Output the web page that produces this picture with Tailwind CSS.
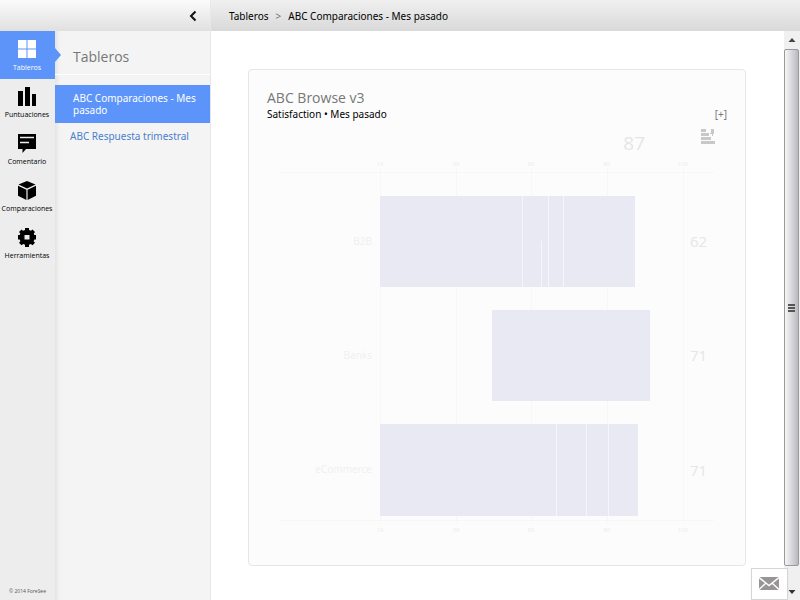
<!DOCTYPE html>
<html lang="es">
<head>
<meta charset="utf-8">
<meta name="viewport" content="width=device-width, initial-scale=1">
<title>ABC Comparaciones - Mes pasado</title>
<script src="https://cdn.jsdelivr.net/npm/@tailwindcss/browser@4"></script>
</head>
<body class="relative flex h-screen flex-col overflow-hidden bg-white font-['Noto_Sans','Open_Sans',sans-serif] text-[10px] text-black">

<header class="flex h-[31px] shrink-0">
  <div class="flex w-[211px] shrink-0 items-center justify-end border-r border-[#e8e8e8] bg-linear-to-b from-[#fbfbfb] to-[#e0e0e0] pr-[11px]">
    <button type="button" aria-label="Contraer menú" class="flex h-4 w-3 items-center justify-center">
      <svg class="h-3 w-2" viewBox="0 0 8 12" fill="none" stroke="#111" stroke-width="2"><path d="M6.500 1.500 2 6l4.500 4.500"/></svg>
    </button>
  </div>
  <nav aria-label="Ruta" class="flex grow items-center gap-[7px] bg-linear-to-b from-[#f0f0f0] to-[#d9d9d9] pl-[18px] pt-0.5">
    <a href="#">Tableros</a>
    <span class="text-[#777]">&gt;</span>
    <a href="#">ABC Comparaciones - Mes pasado</a>
  </nav>
</header>

<div class="flex min-h-0 grow">
  <nav aria-label="Principal" class="flex w-[55px] shrink-0 flex-col bg-[#ededed] text-center font-['Open_Sans','Noto_Sans',sans-serif] text-[7px] leading-[10px]">
    <a href="#" class="relative flex h-12 flex-col items-center gap-1 bg-[#5c94fa] pr-px pt-2 text-white">
      <svg class="h-5 w-5" viewBox="0 0 20 20" fill="#fff"><path d="M1 1h8.500v8.500H1zM10.500 1H19v8.500h-8.500zM1 10.500h8.500V19H1zM10.500 10.500H19V19h-8.500z"/></svg>
      <span>Tableros</span>
      <svg class="absolute left-full top-4 z-10 h-4 w-1.5" viewBox="0 0 6 16" fill="#5c94fa"><path d="M0 1l6 7-6 7z"/></svg>
    </a>
    <a href="#" class="flex h-[47px] flex-col items-center gap-1 pr-px pt-[7px]">
      <svg class="h-5 w-5" viewBox="0 0 20 20"><path d="M1 5h5v15H1zM8 1h5v19H8zM15 8h4v12h-4z"/></svg>
      <span>Puntuaciones</span>
    </a>
    <a href="#" class="flex h-[47px] flex-col items-center gap-1 pr-px pt-[7px]">
      <svg class="h-5 w-5" viewBox="0 0 20 20"><path d="M1 1h18v15H9l-3.500 4V16H1z"/><path d="M3 4.500h14M3 9.500h9" stroke="#ededed" stroke-width="1.400"/></svg>
      <span>Comentario</span>
    </a>
    <a href="#" class="flex h-[47px] flex-col items-center gap-1 pr-px pt-[7px]">
      <svg class="h-5 w-5" viewBox="0 0 20 20"><path d="M10 1l8.500 3.500L10 8.500 1.500 4.500zM1 5.700l8.400 4V20L1 15.800zM19 5.700l-8.400 4V20l8.400-4.200z"/></svg>
      <span>Comparaciones</span>
    </a>
    <a href="#" class="flex h-[47px] flex-col items-center gap-1 pr-px pt-[7px]">
      <svg class="h-5 w-5" viewBox="0 0 20 20"><path fill-rule="evenodd" d="M8 1h4v2l2 .8L15.500 2.500l2.500 2.500L16.800 6.500l.5 1.500H19v4.500h-1.700l-.7 1.800 1.400 1.500-2.500 2.500-1.700-1.300-1.800.8V20H8v-2.200l-1.800-.8-1.700 1.300L2 15.800l1.400-1.500-.7-1.800H1V8h1.700l.6-1.500L2 5l2.500-2.500L6 3.800 8 3zM7.500 8v4.500h5V8z"/></svg>
      <span>Herramientas</span>
    </a>
    <small class="mt-auto pb-1 text-[5px] leading-[10px] text-[#555]">© 2014 ForeSee</small>
  </nav>

  <aside class="w-[156px] shrink-0 border-r border-[#e6e6e6] bg-[#f4f4f4] bg-linear-to-r from-[#e4e4e4] to-[#f4f4f4] to-[5px]">
    <h2 class="border-b border-white pb-2 pl-[18px] pt-4 font-['Open_Sans','Noto_Sans',sans-serif] text-[14px] leading-[19px] text-[#777]">Tableros</h2>
    <ul class="mt-[10px] leading-3">
      <li><a href="#" class="block bg-[#5c94fa] py-[7px] pl-[18px] pr-1 text-white">ABC Comparaciones - Mes pasado</a></li>
      <li><a href="#" class="block py-[7px] pl-[15px] pr-1 text-[#4a7fcd]">ABC Respuesta trimestral</a></li>
    </ul>
  </aside>

  <main class="min-w-0 grow pl-[37px] pr-[38px] pt-[38px]">
    <section class="rounded border border-[#e6e6e6] bg-[#fcfcfc] px-[18px] pb-5 pt-[18px]">
      <div class="flex items-end justify-between">
        <div>
          <h1 class="font-['Open_Sans','Noto_Sans',sans-serif] text-[14px] leading-5 text-[#777]">ABC Browse v3</h1>
          <p class="leading-3">Satisfaction • Mes pasado</p>
        </div>
        <button type="button" class="leading-3 text-[#777]">[+]</button>
      </div>
      <div class="flex h-[35px] items-end justify-end gap-14 pr-3 font-['Open_Sans','Noto_Sans',sans-serif]">
        <span class="text-[19px] leading-6 text-[#e6e6e6]">87</span>
        <button type="button" aria-label="Ordenar" class="mb-2.5">
          <svg class="h-4 w-[14px]" viewBox="0 0 14 16" fill="#c8c8c8"><path d="M0 0h5v3H0zM0 4h8v3H0zM0 8h10v3H0zM0 12h14v3H0zM10 0h3v5h-1v2h-1V5H9V4h1z"/></svg>
        </button>
      </div>
      <svg class="block w-full" viewBox="267 155 460 390" role="img" aria-label="Satisfaction por sector">
        <path d="M279 172.500h435M279 520.500h435M380.500 168v356M456.500 168v356M531.500 168v356M607.500 168v356M683.500 168v356" stroke="#f7f7f7"/>
        <g class="text-[6px]" fill="#ededed" text-anchor="middle">
          <text x="380" y="166">19</text><text x="456" y="166">39</text><text x="531" y="166">60</text><text x="607" y="166">80</text><text x="683" y="166">100</text>
          <text x="380" y="532">19</text><text x="456" y="532">39</text><text x="531" y="532">60</text><text x="607" y="532">80</text><text x="683" y="532">100</text>
        </g>
        <g fill="#e9e9f3">
          <path d="M380 196h255v91H380zM492 310h158v91H492zM380 424h258v92H380z"/>
        </g>
        <path d="M522.500 196v91M548.500 196v91M563.500 196v91M541.500 241v46M556.500 424v92M586.500 424v92M608.500 424v92" stroke="#f6f6f8"/>
        <g class="text-[10px]" fill="#f0f0f0" text-anchor="end">
          <text x="372" y="245">B2B</text><text x="372" y="359">Banks</text><text x="372" y="473">eCommerce</text>
        </g>
        <g class="font-['Open_Sans','Noto_Sans',sans-serif] text-[15px]" fill="#e6e6e6">
          <text x="690" y="247">62</text><text x="690" y="361">71</text><text x="690" y="476">71</text>
        </g>
      </svg>
    </section>
  </main>

  <div aria-hidden="true" class="flex w-4 shrink-0 flex-col items-center bg-[#f0f0f0] pr-px">
    <svg class="h-[18px] w-4 shrink-0" viewBox="0 0 16 18" fill="#444"><path d="M4.500 11h7L8 7z"/></svg>
    <div class="flex w-full grow flex-col items-center justify-center gap-px rounded-xs border border-[#999] bg-linear-to-r from-[#f6f6f6] via-[#d8d8dc] to-[#b9b9c1]">
      <span class="h-0.5 w-[7px] bg-[#555]"></span>
      <span class="h-0.5 w-[7px] bg-[#555]"></span>
      <span class="h-0.5 w-[7px] bg-[#555]"></span>
    </div>
    <svg class="h-[34px] w-4 shrink-0" viewBox="0 0 16 34" fill="#333"><path d="M4.500 24h7L8 28z"/></svg>
  </div>
</div>

<button type="button" aria-label="Enviar comentarios" class="absolute bottom-0 right-3 flex h-8 w-[37px] items-center justify-center border border-[#d6d6d6] bg-white/95 pb-0.5 pr-0.5 shadow-xs">
  <svg class="h-[13px] w-5" viewBox="0 0 20 13"><path fill="#979595" d="M0 0h20v13H0z"/><path d="M0 .5l10 8 10-8M0 12.500l7-6.500M20 12.500L13 6" fill="none" stroke="#fff" stroke-width="1.400"/></svg>
</button>
</body>
</html>
